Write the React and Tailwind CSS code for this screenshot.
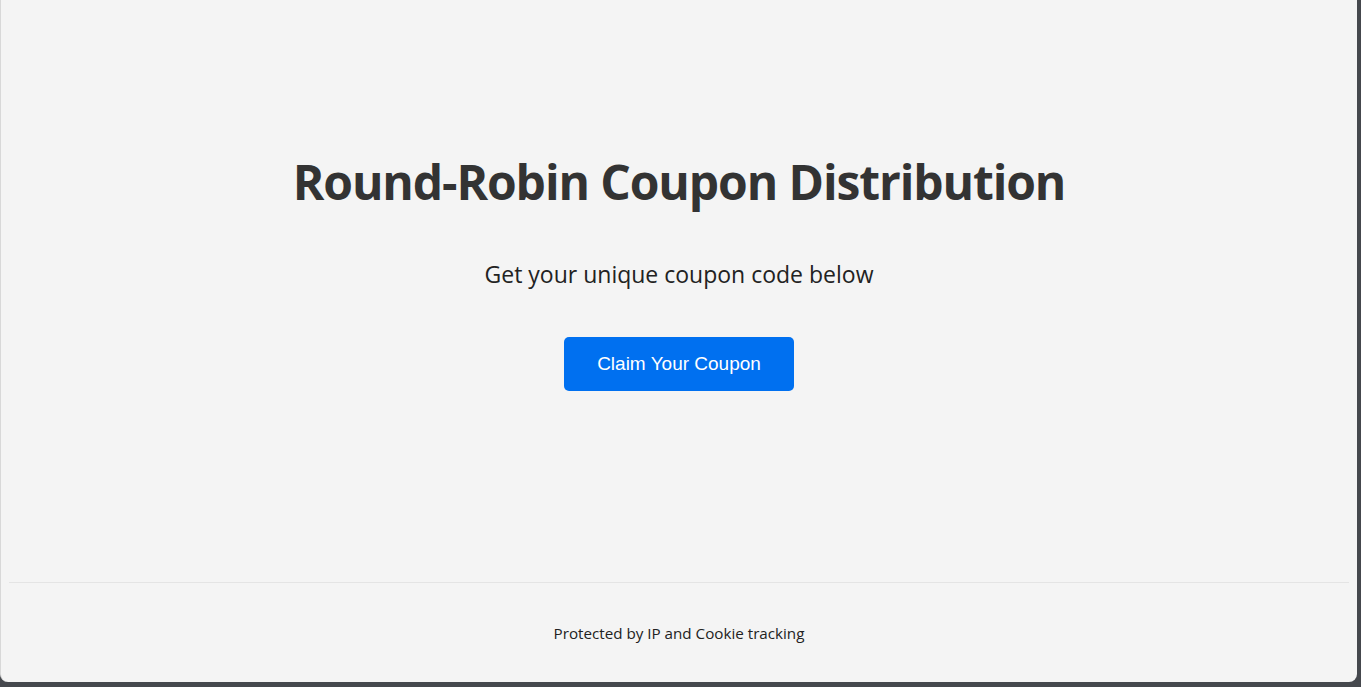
import React from 'react';

function App() {
  return (
    <div className="h-[687px] w-[1361px] bg-[#45484d] overflow-hidden">
      <div className="h-[682px] w-[1357px] bg-[#f4f4f4] border-l border-[#d8d8d8] rounded-b-lg flex flex-col font-['Open_Sans',sans-serif]">
        <main className="flex-1 flex flex-col items-center pt-[153px] px-2">
          <h1 className="text-[48px] leading-[58px] font-bold text-[#333] tracking-[-1.1px]">
            Round-Robin Coupon Distribution
          </h1>
          <p className="mt-[48px] text-[23px] leading-[30px] text-[#222]">
            Get your unique coupon code below
          </p>
          <button className="mt-[48px] w-[230px] h-[54px] bg-[#0070f0] text-white rounded-[5px] text-[19px] font-['Liberation_Sans',Arial,sans-serif]">
            Claim Your Coupon
          </button>
        </main>
        <footer className="mx-2 border-t border-[#e4e4e4] h-[100px] flex justify-center pt-[39px]">
          <p className="text-[15.2px] leading-[22px] text-[#222]">Protected by IP and Cookie tracking</p>
        </footer>
      </div>
    </div>
  );
}

export default App;
